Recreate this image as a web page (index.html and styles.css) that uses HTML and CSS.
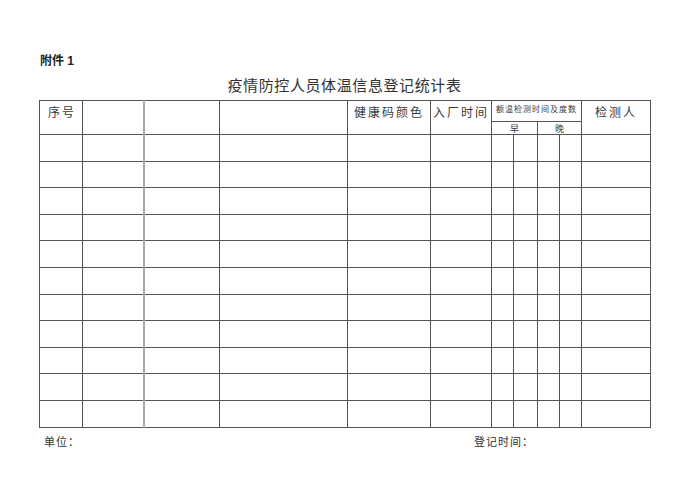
FILE: index.html
```html
<!DOCTYPE html>
<html lang="zh">
<head>
<meta charset="utf-8">
<link rel="stylesheet" href="styles.css">
</head>
<body>
<div class="page">
  <div class="attach">附件 1</div>
  <div class="title">疫情防控人员体温信息登记统计表</div>
  <table class="sheet">
    <colgroup>
      <col class="c1"><col class="c2"><col class="c3"><col class="c4"><col class="c5"><col class="c6">
      <col class="c7"><col class="c8"><col class="c9"><col class="c10"><col class="c11">
    </colgroup>
    <tr class="h1">
      <td rowspan="2" class="hd">序号</td>
      <td rowspan="2"></td>
      <td rowspan="2" class="soft"></td>
      <td rowspan="2"></td>
      <td rowspan="2" class="hd">健康码颜色</td>
      <td rowspan="2" class="hd">入厂时间</td>
      <td colspan="4" class="small">额温检测时间及度数</td>
      <td rowspan="2" class="hd">检测人</td>
    </tr>
    <tr class="h2">
      <td colspan="2" class="sub">早</td>
      <td colspan="2" class="sub">晚</td>
    </tr>
    <tr class="r"><td></td><td></td><td class="soft"></td><td></td><td></td><td></td><td></td><td></td><td></td><td></td><td></td></tr>
    <tr class="r"><td></td><td></td><td class="soft"></td><td></td><td></td><td></td><td></td><td></td><td></td><td></td><td></td></tr>
    <tr class="r"><td></td><td></td><td class="soft"></td><td></td><td></td><td></td><td></td><td></td><td></td><td></td><td></td></tr>
    <tr class="r"><td></td><td></td><td class="soft"></td><td></td><td></td><td></td><td></td><td></td><td></td><td></td><td></td></tr>
    <tr class="r"><td></td><td></td><td class="soft"></td><td></td><td></td><td></td><td></td><td></td><td></td><td></td><td></td></tr>
    <tr class="r"><td></td><td></td><td class="soft"></td><td></td><td></td><td></td><td></td><td></td><td></td><td></td><td></td></tr>
    <tr class="r"><td></td><td></td><td class="soft"></td><td></td><td></td><td></td><td></td><td></td><td></td><td></td><td></td></tr>
    <tr class="r"><td></td><td></td><td class="soft"></td><td></td><td></td><td></td><td></td><td></td><td></td><td></td><td></td></tr>
    <tr class="r"><td></td><td></td><td class="soft"></td><td></td><td></td><td></td><td></td><td></td><td></td><td></td><td></td></tr>
    <tr class="r"><td></td><td></td><td class="soft"></td><td></td><td></td><td></td><td></td><td></td><td></td><td></td><td></td></tr>
    <tr class="r"><td></td><td></td><td class="soft"></td><td></td><td></td><td></td><td></td><td></td><td></td><td></td><td></td></tr>
  </table>
  <div class="footer">
    <span class="unit">单位：</span>
    <span class="date">登记时间：</span>
  </div>
</div>
</body>
</html>
```

FILE: styles.css
```css
html, body {
  margin: 0;
  padding: 0;
  background: #ffffff;
}
.page {
  width: 700px;
  height: 500px;
  box-sizing: border-box;
  padding: 54px 0 0 39px;
  font-family: "Noto Sans CJK SC", "DejaVu Sans", sans-serif;
  color: #333333;
}
.attach {
  font-family: "Liberation Sans", "Noto Sans CJK SC", sans-serif;
  font-weight: bold;
  font-size: 12px;
  line-height: 14px;
  padding-left: 1px;
  color: #222;
}
.title {
  width: 611px;
  text-align: center;
  font-size: 15px;
  line-height: 18px;
  letter-spacing: 0.6px;
  margin-top: 8px;
  color: #333;
}
.sheet {
  border-collapse: collapse;
  table-layout: fixed;
  width: 612px;
  margin-top: 6px;
}
.sheet td {
  border: 1px solid #555555;
  padding: 0;
  text-align: center;
  font-size: 12px;
  color: #3a3a3a;
}
.sheet td.soft {
  border-left: 2px solid #a8a8a8;
}
.c1 { width: 43px; }
.c2 { width: 61px; }
.c3 { width: 76px; }
.c4 { width: 128px; }
.c5 { width: 83px; }
.c6 { width: 61px; }
.c7 { width: 22px; }
.c8 { width: 24px; }
.c9 { width: 22px; }
.c10 { width: 22px; }
.c11 { width: 69px; }
.h1 { height: 21px; }
.h2 { height: 13px; }
.sheet td.hd {
  letter-spacing: 2px;
  vertical-align: top;
  padding-top: 3px;
  line-height: 16px;
}
.sheet td.hd:first-child {
  text-align: left;
  padding-left: 8px;
}
.sheet td.small {
  font-size: 8px;
  line-height: 10px;
  letter-spacing: 1px;
  vertical-align: top;
  padding-top: 3px;
}
.sheet td.sub {
  font-size: 9px;
  line-height: 11px;
}
.r { height: 26.6px; }
.footer {
  width: 611px;
  display: flex;
  font-size: 11px;
  line-height: 14px;
  margin-top: 6px;
  color: #333;
}
.unit {
  padding-left: 5px;
  letter-spacing: 1px;
}
.date {
  margin-left: 394px;
  letter-spacing: 1px;
}
```
